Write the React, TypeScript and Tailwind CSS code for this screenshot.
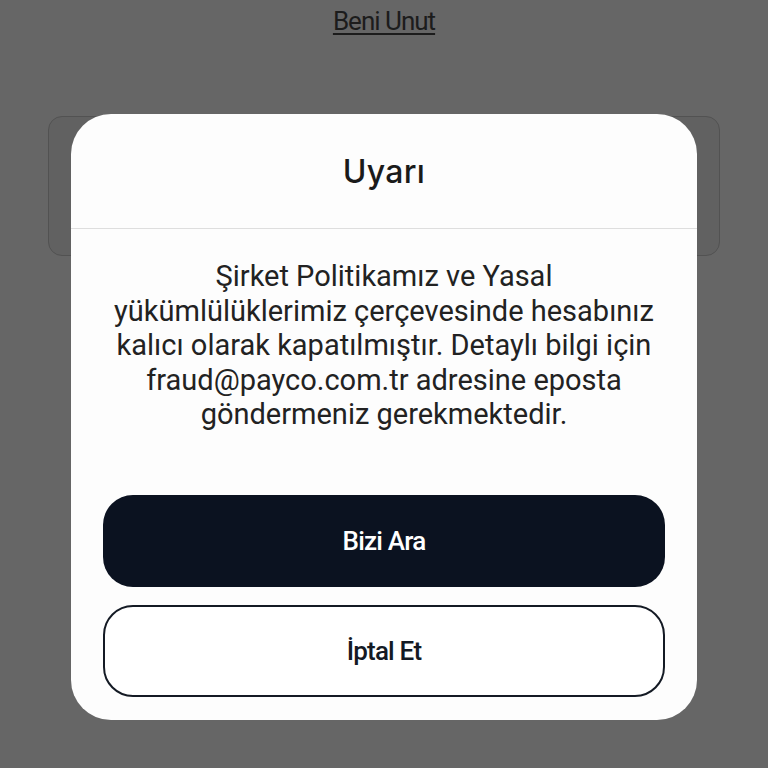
export default function App() {
  return (
    <div className="relative h-[768px] w-full overflow-hidden bg-[#666666] font-['Roboto',sans-serif]">
      {/* page behind the overlay */}
      <div className="flex flex-col items-center pt-[4px]">
        <a className="text-[26px] leading-[34px] tracking-[-1px] text-[#1c1c1c] underline decoration-[1.5px] underline-offset-[3px]">
          Beni Unut
        </a>
        <div className="mt-[78px] ml-[48px] h-[140px] w-[672px] self-start rounded-[14px] border border-[#525252] bg-[#616161]" />
      </div>

      {/* modal */}
      <div className="absolute left-[71px] top-[114px] flex h-[606px] w-[626px] flex-col rounded-[40px] bg-[#fdfdfd]">
        <div className="flex h-[115px] items-center justify-center border-b border-[#dedede]">
          <h2 className="pt-[2px] font-['Inter',sans-serif] text-[32px] font-medium tracking-[0.3px] text-[#1a1a1a]">Uyarı</h2>
        </div>
        <p className="mt-[30px] text-center text-[29px] leading-[34.5px] text-[#222222]">
          Şirket Politikamız ve Yasal
          <br />
          yükümlülüklerimiz çerçevesinde hesabınız
          <br />
          kalıcı olarak kapatılmıştır. Detaylı bilgi için
          <br />
          fraud@payco.com.tr adresine eposta
          <br />
          göndermeniz gerekmektedir.
        </p>
        <div className="mt-auto flex flex-col gap-[18px] px-[32px] pb-[23px]">
          <button className="h-[92px] rounded-[30px] bg-[#0b1220] text-[26px] font-medium tracking-[-0.8px] text-white">
            Bizi Ara
          </button>
          <button className="h-[92px] rounded-[30px] border-2 border-[#141a24] bg-white text-[26px] font-medium tracking-[-0.8px] text-[#141a24]">
            İptal Et
          </button>
        </div>
      </div>
    </div>
  )
}
